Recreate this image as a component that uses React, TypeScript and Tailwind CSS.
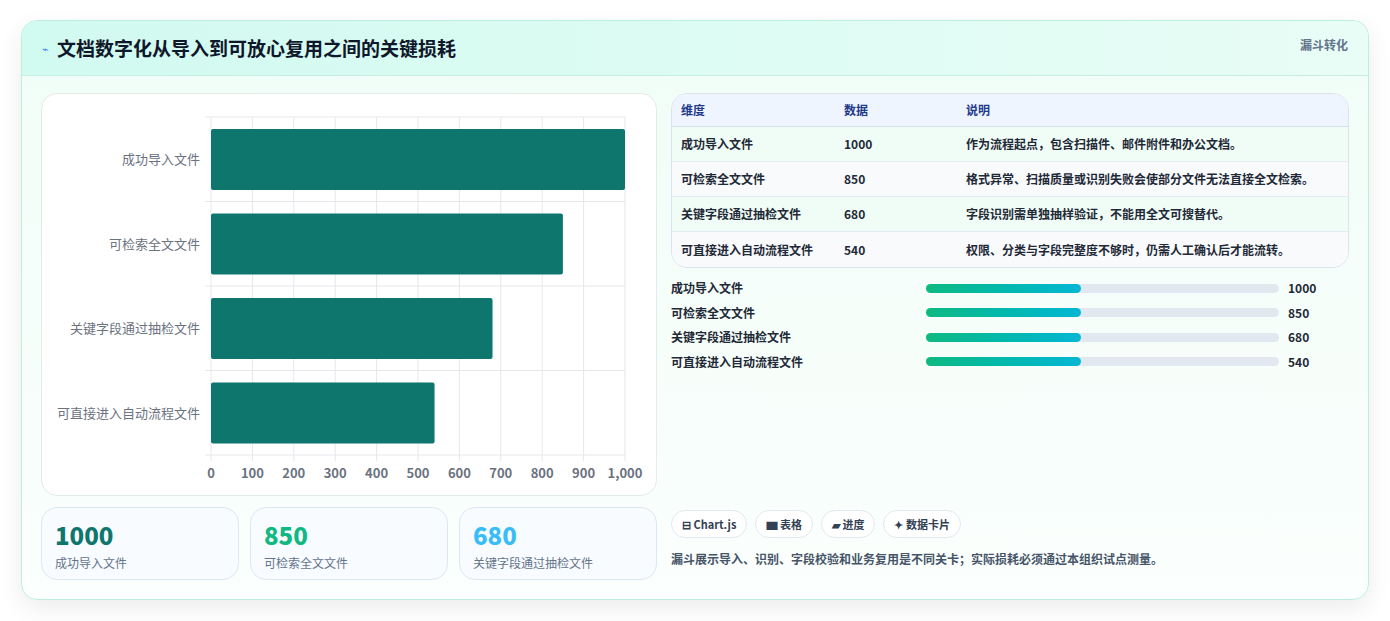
const FONT = { fontFamily: '"Noto Sans CJK SC", "Noto Sans", sans-serif' }

const funnel = [
    { label: "成功导入文件", value: 1000, note: "作为流程起点，包含扫描件、邮件附件和办公文档。" },
    { label: "可检索全文文件", value: 850, note: "格式异常、扫描质量或识别失败会使部分文件无法直接全文检索。" },
    { label: "关键字段通过抽检文件", value: 680, note: "字段识别需单独抽样验证，不能用全文可搜替代。" },
    { label: "可直接进入自动流程文件", value: 540, note: "权限、分类与字段完整度不够时，仍需人工确认后才能流转。" },
]

function BarChart() {
    const x0 = 169
    const w = 414
    const y0 = 23
    const band = 84.5
    return (
        <svg width="616" height="403" className="block">
            {Array.from({ length: 11 }).map((_, i) => {
                const x = x0 + (w * i) / 10
                return (
                    <g key={i}>
                        <line x1={x} y1={y0} x2={x} y2={y0 + band * 4 + 6} stroke="#e5e7eb" />
                        <text x={x} y={384} textAnchor="middle" fontSize="13" fontWeight="600" fill="#6b7280" style={FONT}>
                            {i === 10 ? "1,000" : i * 100}
                        </text>
                    </g>
                )
            })}
            {[0, 1, 2, 3, 4].map((i) => (
                <line key={i} x1={x0 - 6} y1={y0 + band * i} x2={x0 + w} y2={y0 + band * i} stroke="#e5e7eb" />
            ))}
            {funnel.map((d, i) => (
                <g key={d.label}>
                    <rect x={x0} y={y0 + band * i + 12} width={(w * d.value) / 1000} height={61} rx="2" fill="#0f766e" />
                    <text x={x0 - 11} y={y0 + band * i + 47} textAnchor="end" fontSize="13" fill="#6b7280" style={FONT}>
                        {d.label}
                    </text>
                </g>
            ))}
        </svg>
    )
}

function StatCard({ value, label, color }: { value: string; label: string; color: string }) {
    return (
        <div className="flex-1 rounded-2xl border border-[#dbe7f3] bg-[#f8fbff] px-[13px] pt-[10px] pb-[10px]">
            <div className={`text-[24px] font-extrabold leading-[34px] ${color}`}>{value}</div>
            <div className="mt-[2px] text-[12px] text-[#64748b]">{label}</div>
        </div>
    )
}

export default function App() {
    return (
        <div className="min-h-[621px] bg-white pt-[20px] pl-[21px]" style={FONT}>
            <div className="w-[1348px] h-[580px] overflow-hidden rounded-2xl border border-[#bdeee0] bg-gradient-to-b from-[#f0fdf7] to-[#fbfffd] shadow-[0_8px_24px_rgba(0,0,0,0.08)]">
                <div className="flex h-[55px] items-center justify-between border-b border-[#c7eee3] bg-gradient-to-r from-[#d1faf0] to-[#e8fdf6] px-[20px]">
                    <div className="flex items-center gap-[8px]">
                        <span className="text-[11px] text-[#3b82f6]">⌁</span>
                        <h1 className="text-[19px] font-bold text-[#0f172a]">文档数字化从导入到可放心复用之间的关键损耗</h1>
                    </div>
                    <span className="self-start mt-[15px] text-[12px] font-bold text-[#64748b]">漏斗转化</span>
                </div>
                <div className="flex gap-[14px] px-[19px] pt-[17px]">
                    <div className="w-[616px] flex flex-col gap-[11px]">
                        <div className="h-[403px] rounded-2xl border border-[#e2ece8] bg-white">
                            <BarChart />
                        </div>
                        <div className="flex gap-[11px] h-[73px]">
                            <StatCard value="1000" label="成功导入文件" color="text-[#0f766e]" />
                            <StatCard value="850" label="可检索全文文件" color="text-[#10b981]" />
                            <StatCard value="680" label="关键字段通过抽检文件" color="text-[#38bdf8]" />
                        </div>
                    </div>
                    <div className="flex-1 flex flex-col">
                        <div className="overflow-hidden rounded-2xl border border-[#dbe3ee] text-[12px] bg-white">
                            <div className="flex h-[33px] items-center border-b border-[#d6e0ec] bg-[#eef5fe] px-[9px] font-bold text-[#1e3a8a]">
                                <div className="w-[163px]">维度</div>
                                <div className="w-[122px]">数据</div>
                                <div>说明</div>
                            </div>
                            {funnel.map((d, i) => (
                                <div
                                    key={d.label}
                                    className={`flex h-[35px] items-center px-[9px] font-semibold text-[#1f2937] ${i < 3 ? "border-b border-[#e5edf3]" : ""} ${i % 2 === 0 ? "bg-[#f0fdf6]" : "bg-[#f8fafc]"}`}
                                >
                                    <div className="w-[163px]">{d.label}</div>
                                    <div className="w-[122px]">{d.value}</div>
                                    <div>{d.note}</div>
                                </div>
                            ))}
                        </div>
                        <div className="mt-[8px] flex flex-col">
                            {funnel.map((d) => (
                                <div key={d.label} className="flex h-[24.5px] items-center text-[12px] font-semibold text-[#1f2937]">
                                    <div className="w-[255px]">{d.label}</div>
                                    <div className="h-[9px] w-[353px] rounded-full bg-[#e2e8f0]">
                                        <div className="h-full w-[44%] rounded-full bg-gradient-to-r from-[#10b981] to-[#06b6d4]" />
                                    </div>
                                    <div className="ml-[9px] font-bold">{d.value}</div>
                                </div>
                            ))}
                        </div>
                        <div className="mt-auto pb-[12px]">
                            <div className="flex gap-[8px] text-[11px] font-bold text-[#334155]">
                                <span className="rounded-full border border-[#e2e8f0] bg-white px-[10px] py-[5px]">⊟ Chart.js</span>
                                <span className="rounded-full border border-[#e2e8f0] bg-white px-[10px] py-[5px]">▆ 表格</span>
                                <span className="rounded-full border border-[#e2e8f0] bg-white px-[10px] py-[5px]">▰ 进度</span>
                                <span className="rounded-full border border-[#e2e8f0] bg-white px-[10px] py-[5px]">✦ 数据卡片</span>
                            </div>
                            <p className="mt-[12px] text-[12px] font-semibold text-[#475569]">
                                漏斗展示导入、识别、字段校验和业务复用是不同关卡；实际损耗必须通过本组织试点测量。
                            </p>
                        </div>
                    </div>
                </div>
            </div>
        </div>
    )
}
